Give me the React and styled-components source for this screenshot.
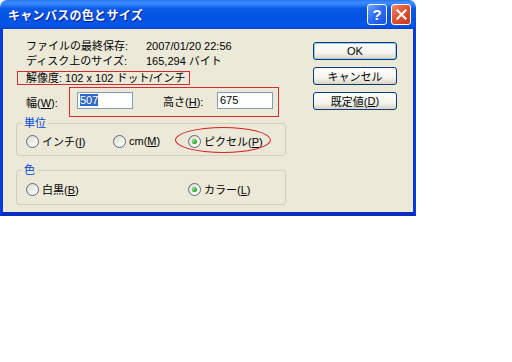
import styled, { createGlobalStyle } from 'styled-components';

const GlobalStyle = createGlobalStyle`
  html, body {
    margin: 0;
    background: #fff;
  }
  body {
    font-family: "Liberation Sans", "Noto Sans CJK JP", sans-serif;
    font-size: 11px;
    color: #000;
  }
`;

const INFO_ROWS = [
  { label: 'ファイルの最終保存:', value: '2007/01/20 22:56' },
  { label: 'ディスク上のサイズ:', value: '165,294 バイト' },
];

function Key({ k }) {
  return (
    <>
      (<Mnemonic>{k}</Mnemonic>)
    </>
  );
}

function Radio({ label, k, checked, col, circled }) {
  return (
    <Option $col={col} $circled={circled}>
      <RadioDot $checked={checked} />
      <span>
        {label}
        <Key k={k} />
      </span>
    </Option>
  );
}

export default function App() {
  return (
    <>
      <GlobalStyle />
      <Window>
        <TitleBar>
          <Title>キャンバスの色とサイズ</Title>
          <Controls>
            <CaptionButton $kind="help">?</CaptionButton>
            <CaptionButton $kind="close">
              <svg width="11" height="11" viewBox="0 0 11 11">
                <path d="M1.5 1.5 L9.5 9.5 M9.5 1.5 L1.5 9.5" stroke="#fff" strokeWidth="2.2" strokeLinecap="square" />
              </svg>
            </CaptionButton>
          </Controls>
        </TitleBar>
        <Client>
          <TopSection>
            <InfoColumn>
              {INFO_ROWS.map((row) => (
                <InfoRow key={row.label}>
                  <InfoLabel>{row.label}</InfoLabel>
                  <span>{row.value}</span>
                </InfoRow>
              ))}
              <MarkedRow>解像度: 102 x 102 ドット/インチ</MarkedRow>
              <SizeRow>
                <SizeLabel>
                  幅<Key k="W" />:
                </SizeLabel>
                <MarkedBox>
                  <TextBox>
                    <Selected>507</Selected>
                  </TextBox>
                  <HeightLabel>
                    高さ<Key k="H" />:
                  </HeightLabel>
                  <TextBox>675</TextBox>
                </MarkedBox>
              </SizeRow>
            </InfoColumn>
            <ButtonColumn>
              <PushButton $default>OK</PushButton>
              <PushButton>キャンセル</PushButton>
              <PushButton>
                既定値<Key k="D" />
              </PushButton>
            </ButtonColumn>
          </TopSection>
          <Group>
            <GroupLabel>単位</GroupLabel>
            <RadioGrid>
              <Radio label="インチ" k="I" col={1} />
              <Radio label="cm" k="M" col={2} />
              <Radio label="ピクセル" k="P" col={3} checked circled />
            </RadioGrid>
          </Group>
          <Group $gap>
            <GroupLabel>色</GroupLabel>
            <RadioGrid>
              <Radio label="白黒" k="B" col={1} />
              <Radio label="カラー" k="L" col={3} checked />
            </RadioGrid>
          </Group>
        </Client>
      </Window>
    </>
  );
}

const Window = styled.div`
  width: 416px;
  display: flex;
  flex-direction: column;
`;

const TitleBar = styled.div`
  height: 29px;
  box-sizing: border-box;
  display: flex;
  align-items: center;
  justify-content: space-between;
  padding: 0 5px 0 8px;
  border-radius: 7px 7px 0 0;
  background: linear-gradient(
    180deg,
    #2a74f5 0%,
    #3d8dff 10%,
    #0a5ae8 30%,
    #0152e2 60%,
    #0255e8 88%,
    #0040c8 100%
  );
`;

const Title = styled.div`
  color: #fff;
  font-family: "Noto Sans CJK JP", sans-serif;
  font-weight: bold;
  font-size: 12px;
  letter-spacing: 0.3px;
  text-shadow: 1px 1px 0 #0a1c8c;
`;

const Controls = styled.div`
  display: flex;
  gap: 4px;
`;

const CaptionButton = styled.div`
  width: 20px;
  height: 21px;
  box-sizing: border-box;
  border: 1px solid #fff;
  border-radius: 3px;
  display: flex;
  align-items: center;
  justify-content: center;
  color: #fff;
  font-family: "Liberation Sans", sans-serif;
  font-weight: bold;
  font-size: 15px;
  background: ${(p) =>
    p.$kind === 'close'
      ? 'linear-gradient(135deg, #f08a6c 0%, #e2542f 45%, #c8381c 100%)'
      : 'linear-gradient(135deg, #6fa4ff 0%, #2f6ef2 45%, #1a54d8 100%)'};
`;

const Client = styled.div`
  background: #ece9d8;
  border: 3px solid #0b3ad8;
  border-top: none;
  border-bottom: 4px solid #0a2cbf;
  padding: 10px 16px 7px 14px;
  display: flex;
  flex-direction: column;
`;

const TopSection = styled.div`
  display: flex;
  justify-content: space-between;
  align-items: flex-start;
`;

const InfoColumn = styled.div`
  display: flex;
  flex-direction: column;
`;

const InfoRow = styled.div`
  display: flex;
  height: 15px;
  line-height: 15px;
  padding-left: 9px;
  white-space: nowrap;
`;

const InfoLabel = styled.span`
  width: 120px;
`;

const MarkedRow = styled.div`
  margin-top: 2px;
  width: 173px;
  box-sizing: border-box;
  height: 14px;
  line-height: 12px;
  border: 1px solid #d82a2a;
  padding-left: 8px;
  white-space: nowrap;
`;

const SizeRow = styled.div`
  margin-top: 2px;
  display: flex;
  align-items: center;
`;

const SizeLabel = styled.span`
  width: 43px;
  padding-left: 9px;
  white-space: nowrap;
`;

const MarkedBox = styled.div`
  width: 210px;
  box-sizing: border-box;
  display: flex;
  align-items: center;
  border: 1px solid #d82a2a;
  padding: 4px 4px 7px 7px;
`;

const HeightLabel = styled.span`
  width: 54px;
  margin-left: 30px;
  white-space: nowrap;
`;

const TextBox = styled.div`
  width: 56px;
  height: 17px;
  box-sizing: border-box;
  border: 1px solid #7f9db9;
  background: #fff;
  padding-left: 2px;
  line-height: 15px;
`;

const Selected = styled.span`
  background: #316ac5;
  color: #fff;
`;

const Mnemonic = styled.span`
  text-decoration: underline;
`;

const ButtonColumn = styled.div`
  display: flex;
  flex-direction: column;
  gap: 7px;
  margin-top: 3px;
`;

const PushButton = styled.div`
  width: 84px;
  height: 18px;
  box-sizing: border-box;
  border: 1px solid #003c74;
  border-radius: 3px;
  display: flex;
  align-items: center;
  justify-content: center;
  background: linear-gradient(180deg, #ffffff 0%, #f5f4ee 60%, #d8d4c6 100%);
  box-shadow: ${(p) => (p.$default ? 'inset 0 0 0 1px #a8c4f0' : 'none')};
  white-space: nowrap;
`;

const Group = styled.fieldset`
  margin: ${(p) => (p.$gap ? '8px' : '0')} 0 0 -1px;
  width: 270px;
  box-sizing: border-box;
  border: 1px solid #d0d0bf;
  border-radius: 3px;
  padding: ${(p) => (p.$gap ? '5px' : '4px')} 0 ${(p) => (p.$gap ? '9px' : '8px')} 9px;
`;

const GroupLabel = styled.legend`
  color: #0046d5;
  line-height: 12px;
  padding: 0 2px;
  margin-left: -4px;
`;

const RadioGrid = styled.div`
  display: grid;
  grid-template-columns: 87px 75px 1fr;
  height: 14px;
  align-items: center;
`;

const Option = styled.div`
  grid-column: ${(p) => p.$col};
  display: flex;
  align-items: center;
  gap: 3px;
  position: relative;
  white-space: nowrap;

  ${(p) =>
    p.$circled &&
    `
    &::before {
      content: "";
      position: absolute;
      left: -13px;
      top: -6px;
      width: 96px;
      height: 26px;
      box-sizing: border-box;
      border: 1px solid #d42020;
      border-radius: 50%;
    }
  `}
`;

const RadioDot = styled.span`
  width: 13px;
  height: 13px;
  box-sizing: border-box;
  border-radius: 50%;
  border: 1px solid #5c6b7c;
  background: linear-gradient(135deg, #d6d6ce 0%, #f4f4f0 60%, #ffffff 100%);
  display: flex;
  align-items: center;
  justify-content: center;
  flex-shrink: 0;

  &::after {
    content: "";
    width: 5px;
    height: 5px;
    border-radius: 50%;
    background: radial-gradient(circle at 35% 35%, #8fe08f 0%, #21a121 70%);
    display: ${(p) => (p.$checked ? 'block' : 'none')};
  }
`;
